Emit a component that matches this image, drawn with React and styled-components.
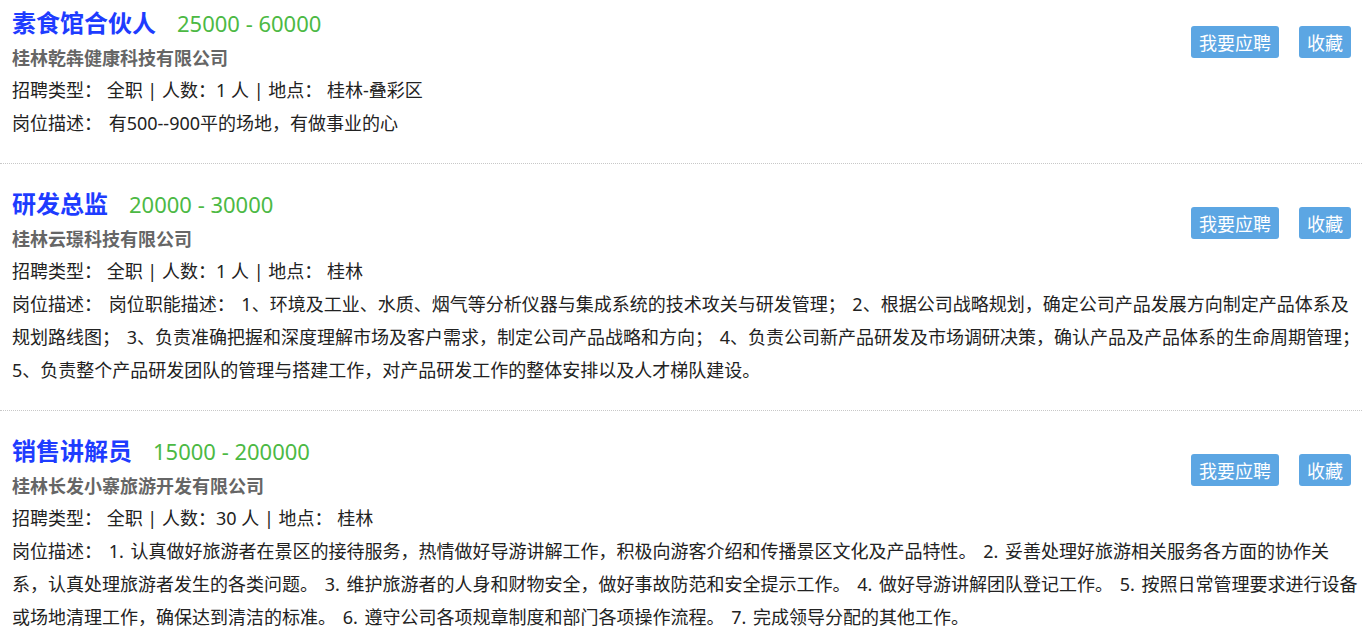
import React from 'react';
import styled, { createGlobalStyle } from 'styled-components';

const GlobalStyle = createGlobalStyle`
  html, body {
    margin: 0;
    padding: 0;
    background: #fff;
  }
  body {
    font-family: "Noto Sans", "Noto Sans CJK SC", sans-serif;
    color: #222;
  }
`;

const List = styled.div`
  width: 100%;
`;

const Item = styled.div`
  padding: 21px 1px 23px 12px;
  border-bottom: 1px dotted #c8c8c8;

  &:first-child {
    padding-top: 4px;
  }
`;

const Head = styled.div`
  display: flex;
  justify-content: space-between;
  align-items: flex-start;
`;

const TitleRow = styled.div`
  display: flex;
  align-items: baseline;
  height: 36px;
  line-height: 36px;
`;

const Title = styled.span`
  font-size: 24px;
  font-weight: 700;
  color: #1e3cff;
  font-family: "Noto Sans CJK SC", sans-serif;
`;

const Salary = styled.span`
  margin-left: 21px;
  font-size: 22px;
  color: #4cb944;
`;

const Company = styled.div`
  margin-top: 2px;
  font-size: 18px;
  line-height: 32px;
  font-weight: 700;
  color: #666;
`;

const Line = styled.div`
  font-size: 18px;
  line-height: 33px;
`;

const Desc = styled(Line)`
  word-spacing: 2px;
`;

const Actions = styled.div`
  display: flex;
  gap: 20px;
  margin: 22px 10px 0 0;
  flex-shrink: 0;
`;

const Button = styled.button`
  height: 32px;
  padding: 0 8px;
  border: none;
  border-radius: 3px;
  background: #5ca6e3;
  color: #fff;
  font-family: "Noto Sans CJK SC", sans-serif;
  font-size: 18px;
  line-height: 32px;
  cursor: pointer;
`;

const jobs = [
  {
    title: '素食馆合伙人',
    salary: '25000 - 60000',
    company: '桂林乾犇健康科技有限公司',
    count: '1',
    place: '桂林-叠彩区',
    desc: '有500--900平的场地，有做事业的心',
  },
  {
    title: '研发总监',
    salary: '20000 - 30000',
    company: '桂林云璟科技有限公司',
    count: '1',
    place: '桂林',
    desc: '岗位职能描述： 1、环境及工业、水质、烟气等分析仪器与集成系统的技术攻关与研发管理； 2、根据公司战略规划，确定公司产品发展方向制定产品体系及规划路线图； 3、负责准确把握和深度理解市场及客户需求，制定公司产品战略和方向； 4、负责公司新产品研发及市场调研决策，确认产品及产品体系的生命周期管理； 5、负责整个产品研发团队的管理与搭建工作，对产品研发工作的整体安排以及人才梯队建设。',
  },
  {
    title: '销售讲解员',
    salary: '15000 - 200000',
    company: '桂林长发小寨旅游开发有限公司',
    count: '30',
    place: '桂林',
    desc: '1. 认真做好旅游者在景区的接待服务，热情做好导游讲解工作，积极向游客介绍和传播景区文化及产品特性。 2. 妥善处理好旅游相关服务各方面的协作关系，认真处理旅游者发生的各类问题。 3. 维护旅游者的人身和财物安全，做好事故防范和安全提示工作。 4. 做好导游讲解团队登记工作。 5. 按照日常管理要求进行设备或场地清理工作，确保达到清洁的标准。 6. 遵守公司各项规章制度和部门各项操作流程。 7. 完成领导分配的其他工作。',
  },
];

const App = () => {
  return (
    <List>
      <GlobalStyle />
      {jobs.map(job => (
        <Item key={job.title}>
          <Head>
            <div>
              <TitleRow>
                <Title>{job.title}</Title>
                <Salary>{job.salary}</Salary>
              </TitleRow>
              <Company>{job.company}</Company>
              <Line>
                招聘类型：&nbsp;全职 | 人数：{job.count} 人 | 地点：&nbsp;{job.place}
              </Line>
            </div>
            <Actions>
              <Button>我要应聘</Button>
              <Button>收藏</Button>
            </Actions>
          </Head>
          <Desc>岗位描述：&nbsp;{job.desc}</Desc>
        </Item>
      ))}
    </List>
  );
};

export default App;
